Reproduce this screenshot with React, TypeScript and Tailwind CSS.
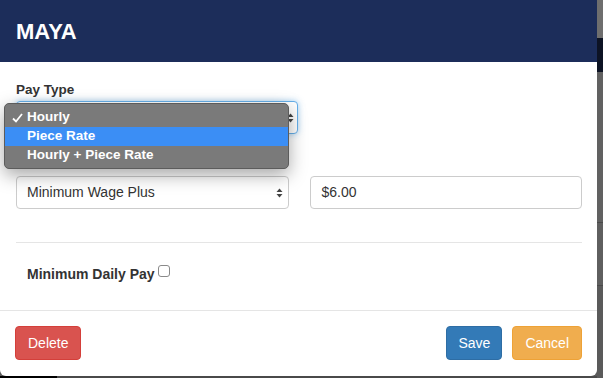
import React from "react";

const font = { fontFamily: '"Liberation Sans", Arial, Helvetica, sans-serif' };

function UpDown({ className }: { className?: string }) {
  return (
    <svg width="7" height="10" viewBox="0 0 7 10" className={className}>
      <path d="M3.5 0.5 L6.5 4 L0.5 4 Z" fill="#444" />
      <path d="M3.5 9.5 L6.5 6 L0.5 6 Z" fill="#444" />
    </svg>
  );
}

function PayTypeMenu() {
  const options = ["Hourly", "Piece Rate", "Hourly + Piece Rate"];
  return (
    <div className="absolute left-[4px] top-[103px] w-[285px] rounded-[5px] border border-[#5c5c5c] bg-[#7a7a7a] pt-[4px] pb-[3px] shadow-[0_6px_18px_rgba(0,0,0,0.35)]">
      {options.map((opt, i) => (
        <div
          key={opt}
          className={
            "flex h-[19px] items-center text-[13.5px] font-bold text-white " +
            (i === 1 ? "bg-[#3b8ef5]" : "")
          }
        >
          <span className="flex w-[22px] justify-center pl-[3px]">
            {i === 0 && (
              <svg width="11" height="10" viewBox="0 0 11 10">
                <path
                  d="M1 5.5 L4 8.5 L10 1"
                  stroke="#fff"
                  strokeWidth="1.8"
                  fill="none"
                />
              </svg>
            )}
          </span>
          <span>{opt}</span>
        </div>
      ))}
    </div>
  );
}

export default function App() {
  return (
    <div className="flex h-[378px] w-[603px] bg-[#5c5c5c]" style={font}>
      <div className="flex w-[597px] flex-col">
        <div className="relative h-[376px] rounded-b-[6px] bg-white">
          {/* header */}
          <div className="flex h-[62px] items-center bg-[#1c2d5a] pl-[16px]">
            <h4 className="text-[22px] font-bold text-white">MAYA</h4>
          </div>

          {/* body */}
          <div className="h-[248px] pl-[16px] pr-[15px] pt-[18px]">
            <label className="mb-[1px] block text-[13.5px] font-bold leading-[20px] text-[#333]">
              Pay Type
            </label>
            <div className="flex h-[33px] w-[282px] items-center justify-end rounded-[4px] border border-[#66afe9] bg-white pr-[3px] shadow-[0_0_6px_rgba(102,175,233,0.6)]">
              <UpDown />
            </div>

            <div className="mt-[42px] grid grid-cols-2 gap-[21px]">
              <div className="flex h-[33px] items-center justify-between rounded-[4px] border border-[#ccc] bg-white pl-[10px] pr-[5px] text-[14px] text-[#333]">
                <span>Minimum Wage Plus</span>
                <UpDown />
              </div>
              <div className="flex h-[33px] items-center rounded-[4px] border border-[#ccc] bg-white pl-[11px] text-[14px] text-[#333]">
                $6.00
              </div>
            </div>

            <div className="mt-[33px] border-t border-[#e5e5e5]" />

            <div className="mt-[21px] flex h-[20px] items-center pl-[11px]">
              <span className="text-[14px] font-bold text-[#333]">Minimum Daily Pay</span>
              <span className="ml-[3px] mt-[-6px] inline-block h-[12px] w-[12px] rounded-[3px] border border-[#8a8a8a] bg-white" />
            </div>
          </div>

          {/* footer */}
          <div className="flex items-center justify-between border-t border-[#e5e5e5] px-[15px] pt-[15px]">
            <button className="h-[34px] rounded-[4px] border border-[#d43f3a] bg-[#d9534f] px-[12px] text-[14px] text-white">
              Delete
            </button>
            <div className="flex gap-[10px]">
              <button className="h-[34px] rounded-[4px] border border-[#2e6da4] bg-[#337ab7] px-[11px] text-[14px] text-white">
                Save
              </button>
              <button className="h-[34px] rounded-[4px] border border-[#eea236] bg-[#f0ad4e] px-[12px] text-[14px] text-white">
                Cancel
              </button>
            </div>
          </div>

          <PayTypeMenu />
        </div>
        <div className="flex h-[2px]">
          <div className="w-[57px] bg-black" />
          <div className="flex-1 bg-[#4a4a4a]" />
        </div>
      </div>

      <div className="flex w-[6px] flex-col">
        <div className="h-[38px] bg-[#6e6e6e]" />
        <div className="h-[34px] bg-[#0d1324]" />
        <div className="h-[150px] bg-[#616161]" />
        <div className="h-[1px] bg-[#4a4a4a]" />
        <div className="h-[62px] bg-[#5f5f5f]" />
        <div className="h-[1px] bg-[#4a4a4a]" />
        <div className="flex-1 bg-[#5a5a5a]" />
      </div>
    </div>
  );
}
